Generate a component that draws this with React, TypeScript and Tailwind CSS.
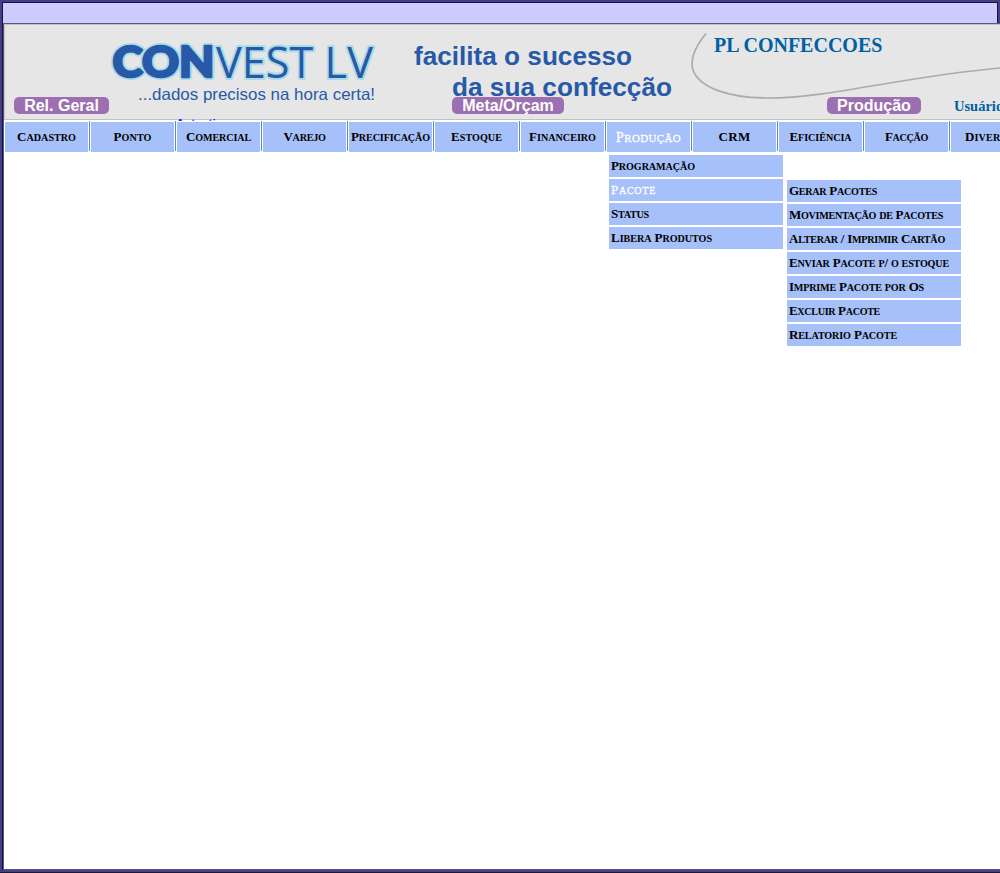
const tabs: { label: string; width: number }[] = [
  { label: "Cadastro", width: 59 },
  { label: "Ponto", width: 38 },
  { label: "Comercial", width: 65 },
  { label: "Varejo", width: 42 },
  { label: "Precificação", width: 79 },
  { label: "Estoque", width: 51 },
  { label: "Financeiro", width: 67 },
  { label: "Produção", width: 65 },
  { label: "CRM", width: 32 },
  { label: "Eficiência", width: 62 },
  { label: "Facção", width: 43 },
  { label: "Diversos", width: 55 },
];

const productionMenu = [
  { label: "Programação", width: 84 },
  { label: "Pacote", width: 45 },
  { label: "Status", width: 38 },
  { label: "Libera Produtos", width: 101 },
];

const packageMenu = [
  { label: "Gerar Pacotes", width: 88 },
  { label: "Movimentação de Pacotes", width: 154 },
  { label: "Alterar / Imprimir Cartão", width: 156 },
  { label: "Enviar Pacote p/ o estoque", width: 160 },
  { label: "Imprime Pacote por Os", width: 135 },
  { label: "Excluir Pacote", width: 91 },
  { label: "Relatorio Pacote", width: 108 },
];

/* Small-caps label whose letter spacing is tuned so the word fills its given width. */
function Caps({ label, width }: { label: string; width: number }) {
  const fit = (el: HTMLSpanElement | null) => {
    if (!el) return;
    el.style.letterSpacing = "0px";
    const natural = el.getBoundingClientRect().width;
    el.style.letterSpacing = `${(width - natural) / label.length}px`;
  };
  return (
    <span ref={fit} className="inline-block whitespace-pre">
      {label.split(/([a-zà-ÿ]+)/).map((part, i) =>
        i % 2 ? (
          <span key={i} className="text-[0.78em] uppercase">
            {part}
          </span>
        ) : (
          part
        ),
      )}
    </span>
  );
}

function Menu({ items, active }: { items: typeof productionMenu; active?: string }) {
  return (
    <ul className="flex w-[174px] flex-col gap-[2px]">
      {items.map((i) => (
        <li
          key={i.label}
          className={
            i.label === active
              ? "flex h-[22px] items-center bg-[#a6c0f9] pl-[2px] font-normal text-white [-webkit-text-stroke:0.3px_white]"
              : "flex h-[22px] items-center bg-[#a6c0f9] pl-[2px] font-bold text-black"
          }
        >
          <Caps label={i.label} width={i.width} />
        </li>
      ))}
    </ul>
  );
}

const pill =
  "flex h-[17px] shrink-0 items-center justify-center rounded-[5px] bg-[#9c6fb0] font-['Liberation_Sans',sans-serif] text-[16px] font-bold leading-[17px] text-white";

function Banner() {
  return (
    <svg className="absolute left-0 top-0" width="995" height="94" viewBox="5 25 995 94">
      <g strokeLinejoin="round" paintOrder="stroke" fontSize="43">
        <g fontFamily="Lato" fontWeight="900" fontSize="42">
          <text x="112.5" y="77" textLength="102" lengthAdjust="spacingAndGlyphs" fill="#a9dce8" stroke="#a9dce8" strokeWidth="6" aria-hidden="true">CON</text>
          <text x="112.5" y="77" textLength="102" lengthAdjust="spacingAndGlyphs" fill="#2859a8" stroke="#2859a8" strokeWidth="2.4">CON</text>
        </g>
        <text x="216" y="77.5" textLength="157" lengthAdjust="spacingAndGlyphs" fontFamily="Open Sans, Noto Sans" fontWeight="400" fill="#2859a8" stroke="#a9dce8" strokeWidth="4">VEST LV</text>
      </g>
      <g fill="#2859a8" fontFamily="Liberation Sans">
        <text x="138" y="99.5" fontSize="16.5" textLength="237" lengthAdjust="spacingAndGlyphs">...dados precisos na hora certa!</text>
        <text x="414" y="65" fontSize="26" fontWeight="700" textLength="218" lengthAdjust="spacingAndGlyphs">facilita o sucesso</text>
        <text x="452" y="96" fontSize="26" fontWeight="700" textLength="220" lengthAdjust="spacingAndGlyphs">da sua confecção</text>
      </g>
      <path d="M706 33.5C695 47 690 60 693 70C699 87 727 98 768 98C830 98 900 77 1000 68" fill="none" stroke="#aaaaae" strokeWidth="1.7" />
    </svg>
  );
}

export default function App() {
  return (
    <div className="flex h-[873px] w-[1000px] flex-col overflow-hidden border-b border-[#1d1836] bg-[#483d8b] pb-[2px] font-['Liberation_Serif',serif] text-[13px]">
      <div className="flex h-[23px] shrink-0 pl-[2px] pr-[2px] pt-[2px]">
        <div className="grow border-l border-r border-t border-[#17122e] bg-[#ccccff]" />
      </div>
      <div className="flex min-h-0 grow pl-[2px]">
        <div className="flex min-w-0 grow border-l border-[#17122e]">
          <div className="flex min-w-0 grow flex-col border-b border-l border-t border-[#4f5d85] bg-white">
            <header className="relative flex h-[96px] shrink-0 flex-col border-b border-l border-t border-[#c2c2c2] bg-[#e6e6e6]">
              <Banner />
              <div className="relative h-[72px] pl-[709px] pt-[8px] text-[20px] font-bold leading-[24px] text-[#0060a2]">
                PL CONFECCOES
              </div>
              <div className="relative flex items-start overflow-hidden">
                <span className={`${pill} ml-[9px] w-[95px]`}>Rel. Geral</span>
                <span className={`${pill} ml-[343px] w-[112px]`}>Meta/Orçam</span>
                <span className={`${pill} ml-[263px] w-[94px]`}>Produção</span>
                <span className="ml-[33px] shrink-0 text-[14.5px] font-bold leading-[19px] text-[#0060a2]">Usuário:</span>
              </div>
              <div className="absolute left-[171px] top-[93px] h-[3px] overflow-hidden font-['Liberation_Sans',sans-serif] text-[11.5px] font-bold leading-[11px] text-[#0033ff]">
                Autenti
              </div>
            </header>
            <nav className="flex h-[32px] shrink-0 overflow-hidden pt-px">
              {tabs.map((t) => (
                <div key={t.label} className="flex h-[31px] shrink-0">
                  <div
                    className={
                      t.label === "Produção"
                        ? "mt-px flex h-[30px] w-[84px] items-center justify-center border-l border-white bg-[#a6c0f9] pt-px text-[14px] text-white [-webkit-text-stroke:0.3px_white]"
                        : "mt-px flex h-[30px] w-[84px] items-center justify-center border-l border-white bg-[#a6c0f9] font-bold text-black"
                    }
                  >
                    <Caps label={t.label} width={t.width} />
                  </div>
                  <div className="ml-px h-[30px] w-px bg-[#5f84d8]" />
                </div>
              ))}
            </nav>
            <div className="flex gap-[4px] pl-[605px] pt-[3px]">
              <Menu items={productionMenu} active="Pacote" />
              <div className="pt-[25px]">
                <Menu items={packageMenu} />
              </div>
            </div>
          </div>
        </div>
      </div>
    </div>
  );
}
